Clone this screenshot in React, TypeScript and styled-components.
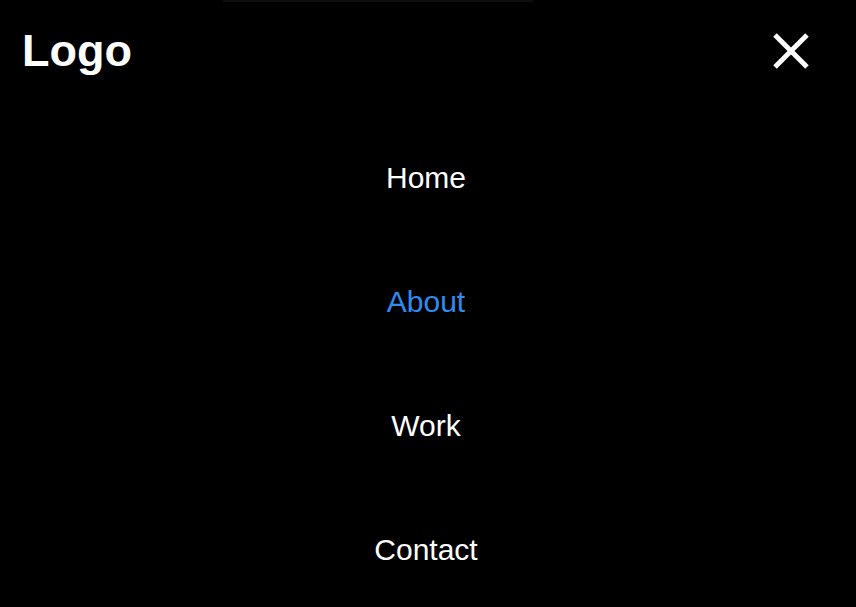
import React from "react";
import styled, { createGlobalStyle } from "styled-components";

const Global = createGlobalStyle`
  html, body { margin: 0; padding: 0; background: #000; }
  body { font-family: "Liberation Sans", Arial, sans-serif; overflow: hidden; }
  * { box-sizing: border-box; }
`;

const Page = styled.div`
  position: relative;
  width: 100%;
  height: 100vh;
  background: #000;
  color: #fff;
  overflow: hidden;
`;

const TopTrack = styled.div`
  position: absolute;
  top: 0;
  left: 223px;
  width: 310px;
  height: 2px;
  background: #0e0e0e;
`;

const Header = styled.header`
  display: flex;
  align-items: center;
  justify-content: space-between;
  height: 104px;
  padding: 0 44px 0 22px;
`;

const Logo = styled.div`
  font-size: 45px;
  font-weight: 700;
  color: #fff;
  line-height: 1;
  margin-top: -4px;
`;

const CloseButton = styled.button`
  background: none;
  border: none;
  padding: 0;
  width: 40px;
  height: 40px;
  display: flex;
  align-items: center;
  justify-content: center;
  cursor: pointer;
  margin-top: -2px;
  margin-right: 1px;
`;

const Nav = styled.nav`
  display: flex;
  flex-direction: column;
  align-items: center;
  padding-top: 12px;
  padding-right: 4px;
`;

const NavItem = styled.a<{ $active?: boolean }>`
  display: flex;
  align-items: center;
  justify-content: center;
  height: 124px;
  font-size: 30px;
  color: ${(p) => (p.$active ? "#2e8cf0" : "#fff")};
  text-decoration: none;
`;

export default function App() {
  const items = ["Home", "About", "Work", "Contact"];
  return (
    <>
      <Global />
      <Page>
        <TopTrack />
        <Header>
          <Logo>Logo</Logo>
          <CloseButton aria-label="Close">
            <svg width="38" height="38" viewBox="0 0 38 38">
              <line x1="3" y1="3" x2="35" y2="35" stroke="#fff" strokeWidth="5" />
              <line x1="35" y1="3" x2="3" y2="35" stroke="#fff" strokeWidth="5" />
            </svg>
          </CloseButton>
        </Header>
        <Nav>
          {items.map((it) => (
            <NavItem key={it} href="#" $active={it === "About"}>
              {it}
            </NavItem>
          ))}
        </Nav>
      </Page>
    </>
  );
}
